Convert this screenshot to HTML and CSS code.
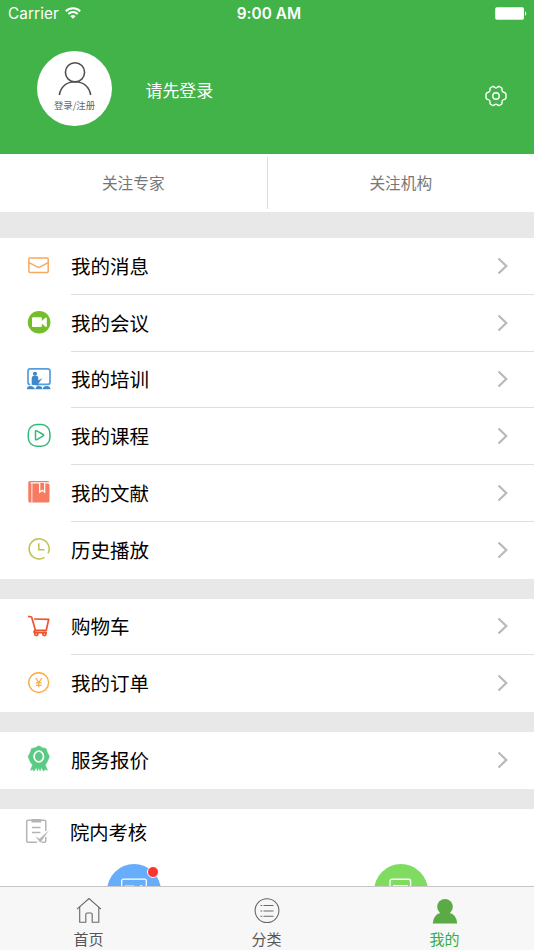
FILE: index.html
```html
<!DOCTYPE html>
<html lang="zh-CN">
<head>
<meta charset="utf-8">
<title>我的</title>
<link rel="stylesheet" href="styles.css">
</head>
<body>
<div class="app">
  <header class="header">
    <div class="status">
      <div class="carrier">Carrier
        <svg class="wifi" width="16" height="12" viewBox="0 0 16 12" fill="none" stroke="#fff" stroke-width="2"><path d="M.8 4.3a10.2 10.2 0 0 1 14.4 0M3.3 7a6.7 6.7 0 0 1 9.4 0"/><path d="M8 11.8 5.4 9.2a3.7 3.7 0 0 1 5.2 0z" fill="#fff" stroke="none"/></svg>
      </div>
      <div class="time">9:00 AM</div>
      <svg class="battery" width="32" height="13" viewBox="0 0 32 13" fill="#fff"><rect x=".2" y=".3" width="28.8" height="12.4" rx="1.6"/><path d="M30 4.3c1.8.8 1.8 3.6 0 4.4z"/></svg>
    </div>
    <div class="profile">
      <div class="avatar">
        <svg width="36" height="36" viewBox="0 0 36 36" fill="none" stroke="#505050" stroke-width="1.6"><circle cx="18" cy="11.3" r="9.6"/><path d="M2.3 34C4 25.500 10 20.800 18 20.800S32 25.500 33.700 34"/></svg>
        <span>登录/注册</span>
      </div>
      <div class="login">请先登录</div>
      <svg class="gear" width="22" height="22" viewBox="0 0 22 22" fill="none" stroke="#fff" stroke-width="1.4" stroke-linejoin="round"><path d="M7.600 1.500Q9 1.300 9.800 2.500Q11 3.300 12.200 2.500Q13 1.300 14.400 1.500L16.600 2.800Q17.400 3.800 16.900 5.200Q17.100 7 18.700 7.300Q20.500 7.600 21 9V13Q20.500 14.400 18.700 14.600Q17.100 15 16.900 16.800Q17.400 18.200 16.600 19.200L14.400 20.500Q13 20.700 12.200 19.500Q11 18.700 9.800 19.500Q9 20.700 7.600 20.500L5.400 19.200Q4.600 18.200 5.100 16.800Q4.900 15 3.300 14.600Q1.500 14.400 1 13V9Q1.500 7.600 3.300 7.300Q4.900 7 5.100 5.200Q4.600 3.800 5.400 2.800Z"/><circle cx="11" cy="11" r="3.200"/></svg>
    </div>
  </header>

  <nav class="follow">
    <a>关注专家</a>
    <a>关注机构</a>
  </nav>

  <main>
    <section class="group">
      <div class="row">
        <svg class="icon" viewBox="0 0 30 30" fill="none" stroke="#f9a85f" stroke-width="1.500" stroke-linejoin="round"><rect x="4.900" y="6.900" width="19.300" height="14.500" rx="1"/><path d="M5 11.600 14.800 16.600 24 11.600"/></svg>
        <div class="cell"><span>我的消息</span><svg class="chevron" viewBox="0 0 12 18"><path d="m1.500 1.500 7.800 7.500-7.800 7.500"/></svg></div>
      </div>
      <div class="row">
        <svg class="icon" viewBox="0 0 30 30"><circle cx="15.100" cy="14.200" r="11.300" fill="#74bd2b"/><rect x="8" y="9.300" width="9.800" height="9.800" rx="1" fill="#fff"/><path d="m17 13.500 4.800-4q1 0 1 1v7.400q0 1-1 1L17 15z" fill="#fff"/></svg>
        <div class="cell"><span>我的会议</span><svg class="chevron" viewBox="0 0 12 18"><path d="m1.500 1.500 7.800 7.500-7.800 7.500"/></svg></div>
      </div>
      <div class="row">
        <svg class="icon" viewBox="0 0 30 30"><path d="M6.300 19.500H6Q4 19.500 4 17.500V6Q4 3.800 6.200 3.800H23.800Q26 3.800 26 6V17.300Q26 19.300 24 19.300H13" fill="none" stroke="#579ddb" stroke-width="1.700"/><g fill="#3f88ca"><circle cx="11" cy="8.800" r="2.100"/><path d="M7.700 19.800V13Q7.700 11 9.600 11H12.800Q14.300 11 14.300 13V15.500L18.500 13 14.300 18.800V20.500Z"/><path d="M2.900 24.300Q3 21 6.200 21T11.100 24.300ZM11.500 24.300Q11.600 21 14.900 21T18.500 24.300ZM18.900 24.300Q19 21 22.600 21T26.500 24.300Z"/></g></svg>
        <div class="cell"><span>我的培训</span><svg class="chevron" viewBox="0 0 12 18"><path d="m1.500 1.500 7.800 7.500-7.800 7.500"/></svg></div>
      </div>
      <div class="row">
        <svg class="icon" viewBox="0 0 30 30" fill="none" stroke="#34b976" stroke-width="1.500" stroke-linejoin="round"><rect x="4.300" y="2.600" width="21.600" height="21.600" rx="8.500"/><path d="M11.500 9.500Q11.600 8.300 12.800 8.900L19.200 12.500Q20.200 13.200 19.200 13.900L12.800 17.600Q11.600 18.200 11.500 17Z"/></svg>
        <div class="cell"><span>我的课程</span><svg class="chevron" viewBox="0 0 12 18"><path d="m1.500 1.500 7.800 7.500-7.800 7.500"/></svg></div>
      </div>
      <div class="row">
        <svg class="icon" viewBox="0 0 30 30"><path d="M5.600 2.900H24.800V4.300H6.500V5.500H24Q25.500 5.500 25.500 7V23.200Q25.500 24.500 24 24.500H6Q4.300 24.500 4.300 23V4.500Q4.300 2.900 5.600 2.900Z" fill="#f67b61"/><path d="M7.900 5.500V24.500" stroke="#fff" stroke-width=".9"/><path d="M15.700 5V14.200L18.200 12.200 20.700 14.200V5" fill="#f67b61" stroke="#fff" stroke-width="1.200"/></svg>
        <div class="cell"><span>我的文献</span><svg class="chevron" viewBox="0 0 12 18"><path d="m1.500 1.500 7.800 7.500-7.800 7.500"/></svg></div>
      </div>
      <div class="row">
        <svg class="icon" viewBox="0 0 30 30" fill="none" stroke="#bfc052" stroke-width="1.500"><path d="M20.500 22.300A10 10 0 1 1 24 18.500M14.800 8.300V14.800H20.500"/></svg>
        <div class="cell"><span>历史播放</span><svg class="chevron" viewBox="0 0 12 18"><path d="m1.500 1.500 7.800 7.500-7.800 7.500"/></svg></div>
      </div>
    </section>

    <section class="group">
      <div class="row">
        <svg class="icon" viewBox="0 0 30 30" fill="none" stroke="#ec5430" stroke-width="1.700" stroke-linejoin="round"><path d="M4 4.300 7.600 5 11.400 18.300H22.300L24.700 7.300 10 7M11.400 18.300Q9.300 19.500 10.300 20.600H23"/><circle cx="12.300" cy="22" r="1.600"/><circle cx="20.300" cy="22" r="1.600"/></svg>
        <div class="cell"><span>购物车</span><svg class="chevron" viewBox="0 0 12 18"><path d="m1.500 1.500 7.800 7.500-7.800 7.500"/></svg></div>
      </div>
      <div class="row">
        <svg class="icon" viewBox="0 0 30 30" fill="none" stroke="#fbac43" stroke-width="1.400"><circle cx="14.700" cy="13.600" r="9.900"/><path d="m11.700 9 3.100 4.700L17.900 9M14.800 13.500V18.500M11.900 13.900H17.700M11.900 16.300H17.700" stroke-width="1.200"/></svg>
        <div class="cell"><span>我的订单</span><svg class="chevron" viewBox="0 0 12 18"><path d="m1.500 1.500 7.800 7.500-7.800 7.500"/></svg></div>
      </div>
    </section>

    <section class="group">
      <div class="row">
        <svg class="icon" viewBox="0 0 30 30"><path d="M14.800.9Q16.600 1.200 18.100 2.700L22 3.400 23.300 7.200 25.500 11.500 24 15.200 22.400 18.400 21.200 19.700 23.500 25.200 20.700 24.500 19.500 26.200 17.300 22.400 16.200 25.900 14.700 22.900 13.400 25.900 12.300 22.400 10 26.200 8.900 24.500 6.500 25.200 8.600 19.700 7.300 18.400 5.500 15.200 4.100 11.500 6.300 7.200 7.600 3.400 11.500 2.700Q13 1.200 14.800.9Z" fill="#59cb82" stroke="#59cb82" stroke-width=".5" stroke-linejoin="round"/><ellipse cx="14.800" cy="11.500" rx="4.700" ry="5.300" fill="none" stroke="#fff" stroke-width="1.700"/></svg>
        <div class="cell"><span>服务报价</span><svg class="chevron" viewBox="0 0 12 18"><path d="m1.500 1.500 7.800 7.500-7.800 7.500"/></svg></div>
      </div>
    </section>

    <section class="group assess">
      <div class="assess-title">
        <svg width="26" height="26" viewBox="0 0 26 26" fill="none" stroke="#b5b5b5" stroke-width="1.500"><path d="M12 24.200H3Q1.700 24.200 1.700 23V3.500Q1.700 2.200 3 2.200H19.500Q20.800 2.200 20.800 3.500V13M20.800 19V23Q20.800 24.200 19.500 24.200H16.500"/><path d="M6.500 1H16.300V4.500H6.500Z" fill="#b5b5b5" stroke="none"/><path d="M7 9.500H15.500M7 14.600H15.500"/><path d="M10.300 18.300 14.500 20.800 24 12.300 15.300 24.800Z" fill="#b5b5b5" stroke="none"/></svg>
        <span>院内考核</span>
      </div>
      <div class="tiles">
        <div class="tile">
          <div class="disc blue"><svg width="28" height="24" viewBox="0 0 28 24" fill="none" stroke="#fff" stroke-width="1.300"><rect x="1.700" y="1.200" width="24.600" height="18" rx="1.500"/><path d="M5 8.200H13L10 12M19 9.300 21 7.800 22.500 8.500V13"/></svg><i class="dot"></i></div>
        </div>
        <div class="tile">
          <div class="disc green"><svg width="28" height="24" viewBox="0 0 28 24" fill="none" stroke="#fff" stroke-width="1.400"><rect x="3" y="1.200" width="20.600" height="24" rx="2"/><path d="M6 7.800H21"/></svg></div>
        </div>
      </div>
    </section>
  </main>

  <footer class="tabbar">
    <a class="tab">
      <svg width="28" height="28" viewBox="0 0 28 28" fill="none" stroke="#686868" stroke-width="1.100"><path d="M2 13.200 14 2.600 26 13.200M4.700 11V26.300H10.800V18.500Q10.800 17 12.300 17H15.700Q17.200 17 17.200 18.500V26.300H23.800V11"/></svg>
      <span>首页</span>
    </a>
    <a class="tab">
      <svg width="28" height="28" viewBox="0 0 28 28" fill="none" stroke="#686868" stroke-width="1.100"><circle cx="14" cy="14.600" r="11.900"/><path d="M7.500 9.500H9.300M10.500 9.500H20.500M7.500 15H9.300M10.500 15H20.500M7.500 20.200H9.300M10.500 20.200H20.500"/></svg>
      <span>分类</span>
    </a>
    <a class="tab active">
      <svg width="28" height="28" viewBox="0 0 28 28" fill="#5aaa46"><circle cx="14" cy="10.700" r="7.800"/><path d="M1.700 27.500Q2.300 18.500 10 16.800H18Q25.700 18.500 26.300 27.500Z"/></svg>
      <span>我的</span>
    </a>
  </footer>
</div>
</body>
</html>
```
FILE: styles.css
```css
* { box-sizing: border-box; }

body {
  margin: 0;
  background: #fff;
  font-family: "Noto Sans CJK SC", sans-serif;
  font-weight: 400;
  color: #000;
}

.app {
  display: flex;
  flex-direction: column;
  height: 950px;
  overflow: hidden;
}

svg { display: block; flex: none; }

.header {
  flex: none;
  height: 153.7px;
  background: #42b349;
  color: #fff;
}

.status {
  display: grid;
  grid-template-columns: 1fr auto 1fr;
  align-items: center;
  height: 28px;
  padding: 0 7px 0 8px;
  font: 15.3px/20px Inter, sans-serif;
}
.carrier { display: flex; align-items: center; gap: 6px; letter-spacing: .1px; }
.wifi { margin-top: -3px; }
.time { margin-left: 3px; font-weight: 600; letter-spacing: .1px; }
.battery { justify-self: end; margin-top: -1px; }

.profile {
  display: flex;
  align-items: center;
  height: 120px;
  padding: 0 27.500px 0 37px;
}
.avatar {
  display: flex;
  flex-direction: column;
  align-items: center;
  width: 75px;
  height: 75px;
  padding-top: 10.500px;
  border-radius: 50%;
  background: #fff;
  color: #666;
  font-size: 9.400px;
  line-height: 14px;
}
.avatar span { margin-top: .5px; }
.login { margin: 3px auto 0 33.500px; font-size: 16.900px; }
.gear { margin-top: 16px; }

.follow {
  display: flex;
  flex: none;
  height: 58.300px;
  padding: 3px 0;
  color: #777;
  font-size: 15.700px;
}
.follow a {
  display: flex;
  flex: 1;
  align-items: center;
  justify-content: center;
}
.follow a + a { border-left: 1px solid #ddd; }

main {
  display: flex;
  flex: 1;
  flex-direction: column;
  gap: 20px;
  min-height: 0;
  padding-top: 26px;
  overflow: hidden;
  background: #e8e8e8;
}

.group { flex: none; background: #fff; }
.row { display: flex; align-items: center; height: 56.770px; padding-left: 24px; }
.icon { width: 30px; height: 30px; }
.cell {
  display: flex;
  flex: 1;
  align-items: center;
  justify-content: space-between;
  height: 100%;
  margin-left: 17px;
  padding-right: 25px;
  border-bottom: 1px solid #dedede;
  font-size: 19.500px;
}
.cell span { margin-top: -1px; }
.row:last-child .cell { border-bottom-color: transparent; }
.chevron { width: 12px; height: 18px; fill: none; stroke: #b9b9bd; stroke-width: 2.200; }

.assess { flex: 1 0 auto; }
.assess-title {
  display: flex;
  align-items: center;
  gap: 19px;
  height: 45px;
  padding-left: 25px;
  font-size: 19.300px;
}
.assess-title span { margin-top: 1px; }
.tiles { display: flex; padding-top: 10px; }
.tile { display: flex; flex: 1; justify-content: center; }
.disc {
  position: relative;
  display: flex;
  justify-content: center;
  width: 54px;
  height: 54px;
  padding-top: 14px;
  border-radius: 50%;
}
.blue { background: #66adfb; }
.green { background: #7fdc61; }
.dot {
  position: absolute;
  top: 2px;
  right: 2px;
  width: 12px;
  height: 12px;
  border: 1px solid #fff;
  border-radius: 50%;
  background: #fb3430;
}

.tabbar {
  z-index: 1;
  display: flex;
  flex: none;
  height: 64px;
  margin-top: -64px;
  border-top: 1px solid #c6c6c6;
  background: #f7f7f7;
  color: #555;
  font-size: 15px;
  line-height: 20px;
}
.tab { display: flex; flex: 1; flex-direction: column; align-items: center; padding-top: 9px; }
.tab span { margin: 5px 1px 0 0; }
.active { color: #34ae42; }
```
